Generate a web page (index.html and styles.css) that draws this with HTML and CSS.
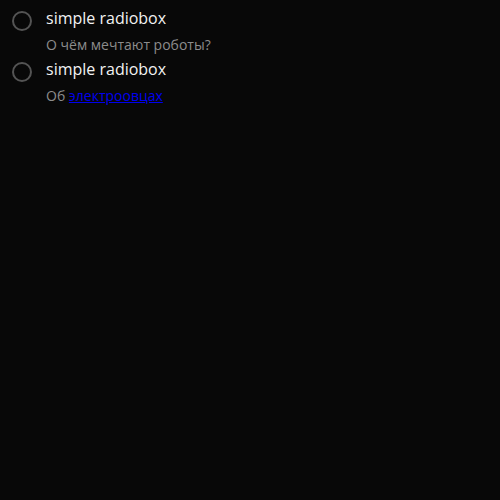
FILE: index.html
```html
<!DOCTYPE html>
<html lang="ru">
<head>
<meta charset="utf-8">
<link rel="stylesheet" href="styles.css">
</head>
<body>
<div class="list">
  <label class="radio">
    <span class="trigger"></span>
    <span class="content">
      <span class="label">simple radiobox</span>
      <span class="desc">О чём мечтают роботы?</span>
    </span>
  </label>
  <label class="radio">
    <span class="trigger"></span>
    <span class="content">
      <span class="label">simple radiobox</span>
      <span class="desc">Об <a href="#">электроовцах</a></span>
    </span>
  </label>
</div>
</body>
</html>
```
FILE: styles.css
```css
html, body {
  margin: 0;
  background: #080808;
  height: 100%;
}
body {
  font-family: "Open Sans", sans-serif;
  color: #f0f0f0;
}
.list {
  display: flex;
  flex-direction: column;
  padding: 9px 0 0 12px;
  gap: 6px;
}
.radio {
  display: flex;
  gap: 14px;
}
.trigger {
  flex: none;
  width: 20px;
  height: 20px;
  margin-top: 2px;
  box-sizing: border-box;
  border: 2px solid #545454;
  border-radius: 50%;
}
.content {
  display: flex;
  flex-direction: column;
  gap: 9px;
}
.label {
  font-size: 16px;
  line-height: 18px;
  color: #f2f2f2;
}
.desc {
  font-size: 14px;
  line-height: 18px;
  color: #8c8c8c;
}
.desc a {
  color: #0000ee;
}
```
